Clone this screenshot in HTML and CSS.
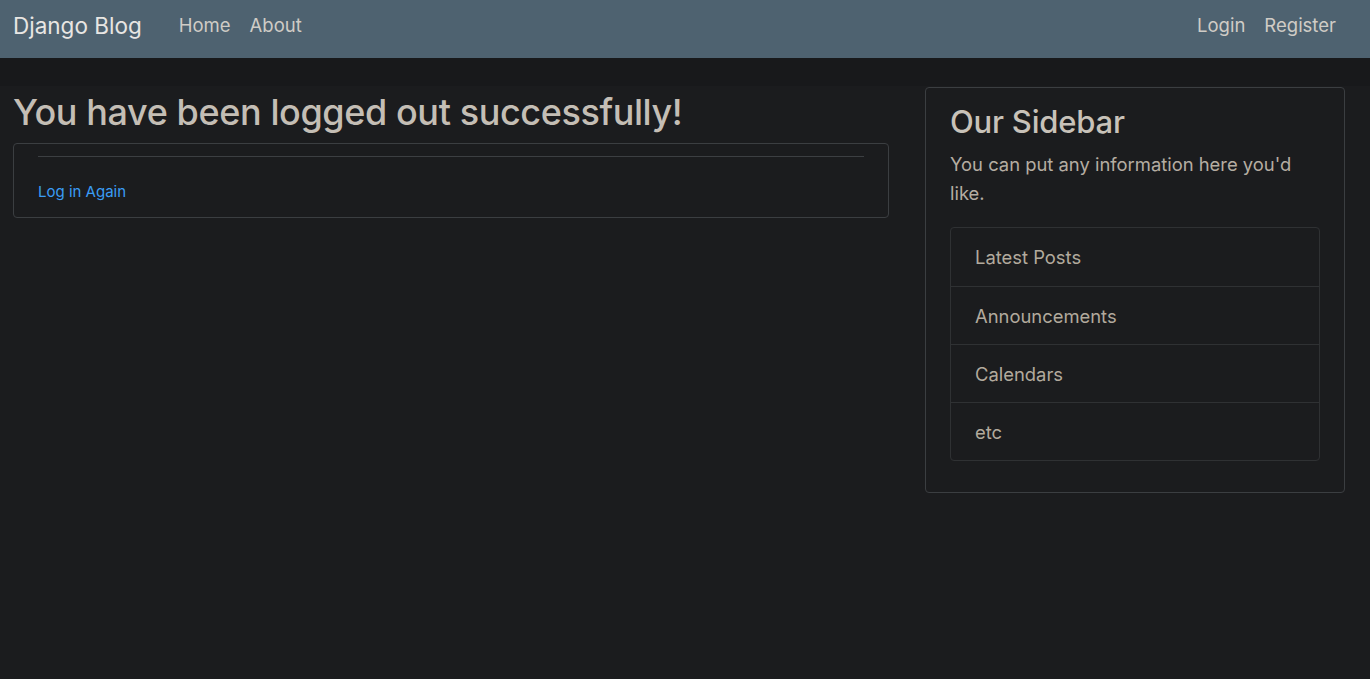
FILE: index.html
```html
<!DOCTYPE html>
<html lang="en">
<head>
<meta charset="utf-8">
<title>Django Blog</title>
<link rel="stylesheet" href="styles.css">
</head>
<body>
<header class="navbar">
  <div class="nav-left">
    <a class="brand" href="#">Django Blog</a>
    <nav class="nav-links">
      <a class="nav-link" href="#">Home</a>
      <a class="nav-link" href="#">About</a>
    </nav>
  </div>
  <nav class="nav-links nav-right">
    <a class="nav-link" href="#">Login</a>
    <a class="nav-link" href="#">Register</a>
  </nav>
</header>
<div class="band"></div>
<main class="main">
  <section class="content">
    <h1 class="page-title">You have been logged out successfully!</h1>
    <div class="card">
      <hr class="rule">
      <a class="small-link" href="#">Log in Again</a>
    </div>
  </section>
  <aside class="sidebar">
    <h3 class="side-title">Our Sidebar</h3>
    <p class="side-text">You can put any information here you'd like.</p>
    <ul class="list-group">
      <li class="list-item">Latest Posts</li>
      <li class="list-item">Announcements</li>
      <li class="list-item">Calendars</li>
      <li class="list-item">etc</li>
    </ul>
  </aside>
</main>
</body>
</html>
```
FILE: styles.css
```css
* { box-sizing: border-box; }
html, body { margin: 0; padding: 0; }
body {
  background: #1b1c1e;
  font-family: Inter, "Noto Sans", "Liberation Sans", sans-serif;
  color: #c8c3bc;
  min-height: 679px;
}
a { text-decoration: none; }

.navbar {
  height: 58px;
  background: #4e6270;
  display: flex;
  align-items: center;
  justify-content: space-between;
  padding: 0 25px 8px 13px;
}
.nav-left { display: flex; align-items: center; }
.brand {
  color: #e8e6e3;
  font-size: 22.5px;
  font-weight: 400;
  margin-right: 28px;
}
.nav-links { display: flex; align-items: center; gap: 1px; }
.nav-right { gap: 1px; }
.nav-link {
  color: #d0ccc6;
  font-size: 18.5px;
  padding: 0 9px;
}

.band { height: 28px; background: #18191b; }

.main {
  display: flex;
  align-items: flex-start;
  gap: 36px;
  padding: 0 25px 0 13px;
}
.content { width: 876px; }
.page-title {
  margin: 0 0 5px;
  font-size: 36px;
  line-height: 52px;
  font-weight: 500;
  color: #c4beb5;
  letter-spacing: -0.4px;
}
.card {
  border: 1px solid #3b3e41;
  border-radius: 4px;
  padding: 12px 24px 14px;
}
.rule {
  border: 0;
  border-top: 1px solid #3c3f42;
  margin: 0 0 24px;
}
.small-link {
  color: #3a9cf5;
  font-size: 15px;
  line-height: 22px;
}

.sidebar {
  flex: 1;
  margin-top: 1px;
  border: 1px solid #3b3e41;
  border-radius: 4px;
  padding: 12px 24px 31px;
}
.side-title {
  margin: 0 0 6px;
  font-size: 31px;
  line-height: 44px;
  font-weight: 500;
  color: #c8c2b9;
  letter-spacing: -0.2px;
}
.side-text {
  margin: 0 0 19px;
  font-size: 18.4px;
  line-height: 29px;
  color: #b5ada2;
}
.list-group {
  list-style: none;
  margin: 0;
  padding: 0;
  border: 1px solid #2f3133;
  border-radius: 4px;
}
.list-item {
  height: 58px;
  display: flex;
  align-items: center;
  padding: 0 24px 0 24px;
  font-size: 18.4px;
  color: #b2aa9d;
  border-top: 1px solid #2f3133;
}
.list-item:first-child { border-top: 0; }
```
